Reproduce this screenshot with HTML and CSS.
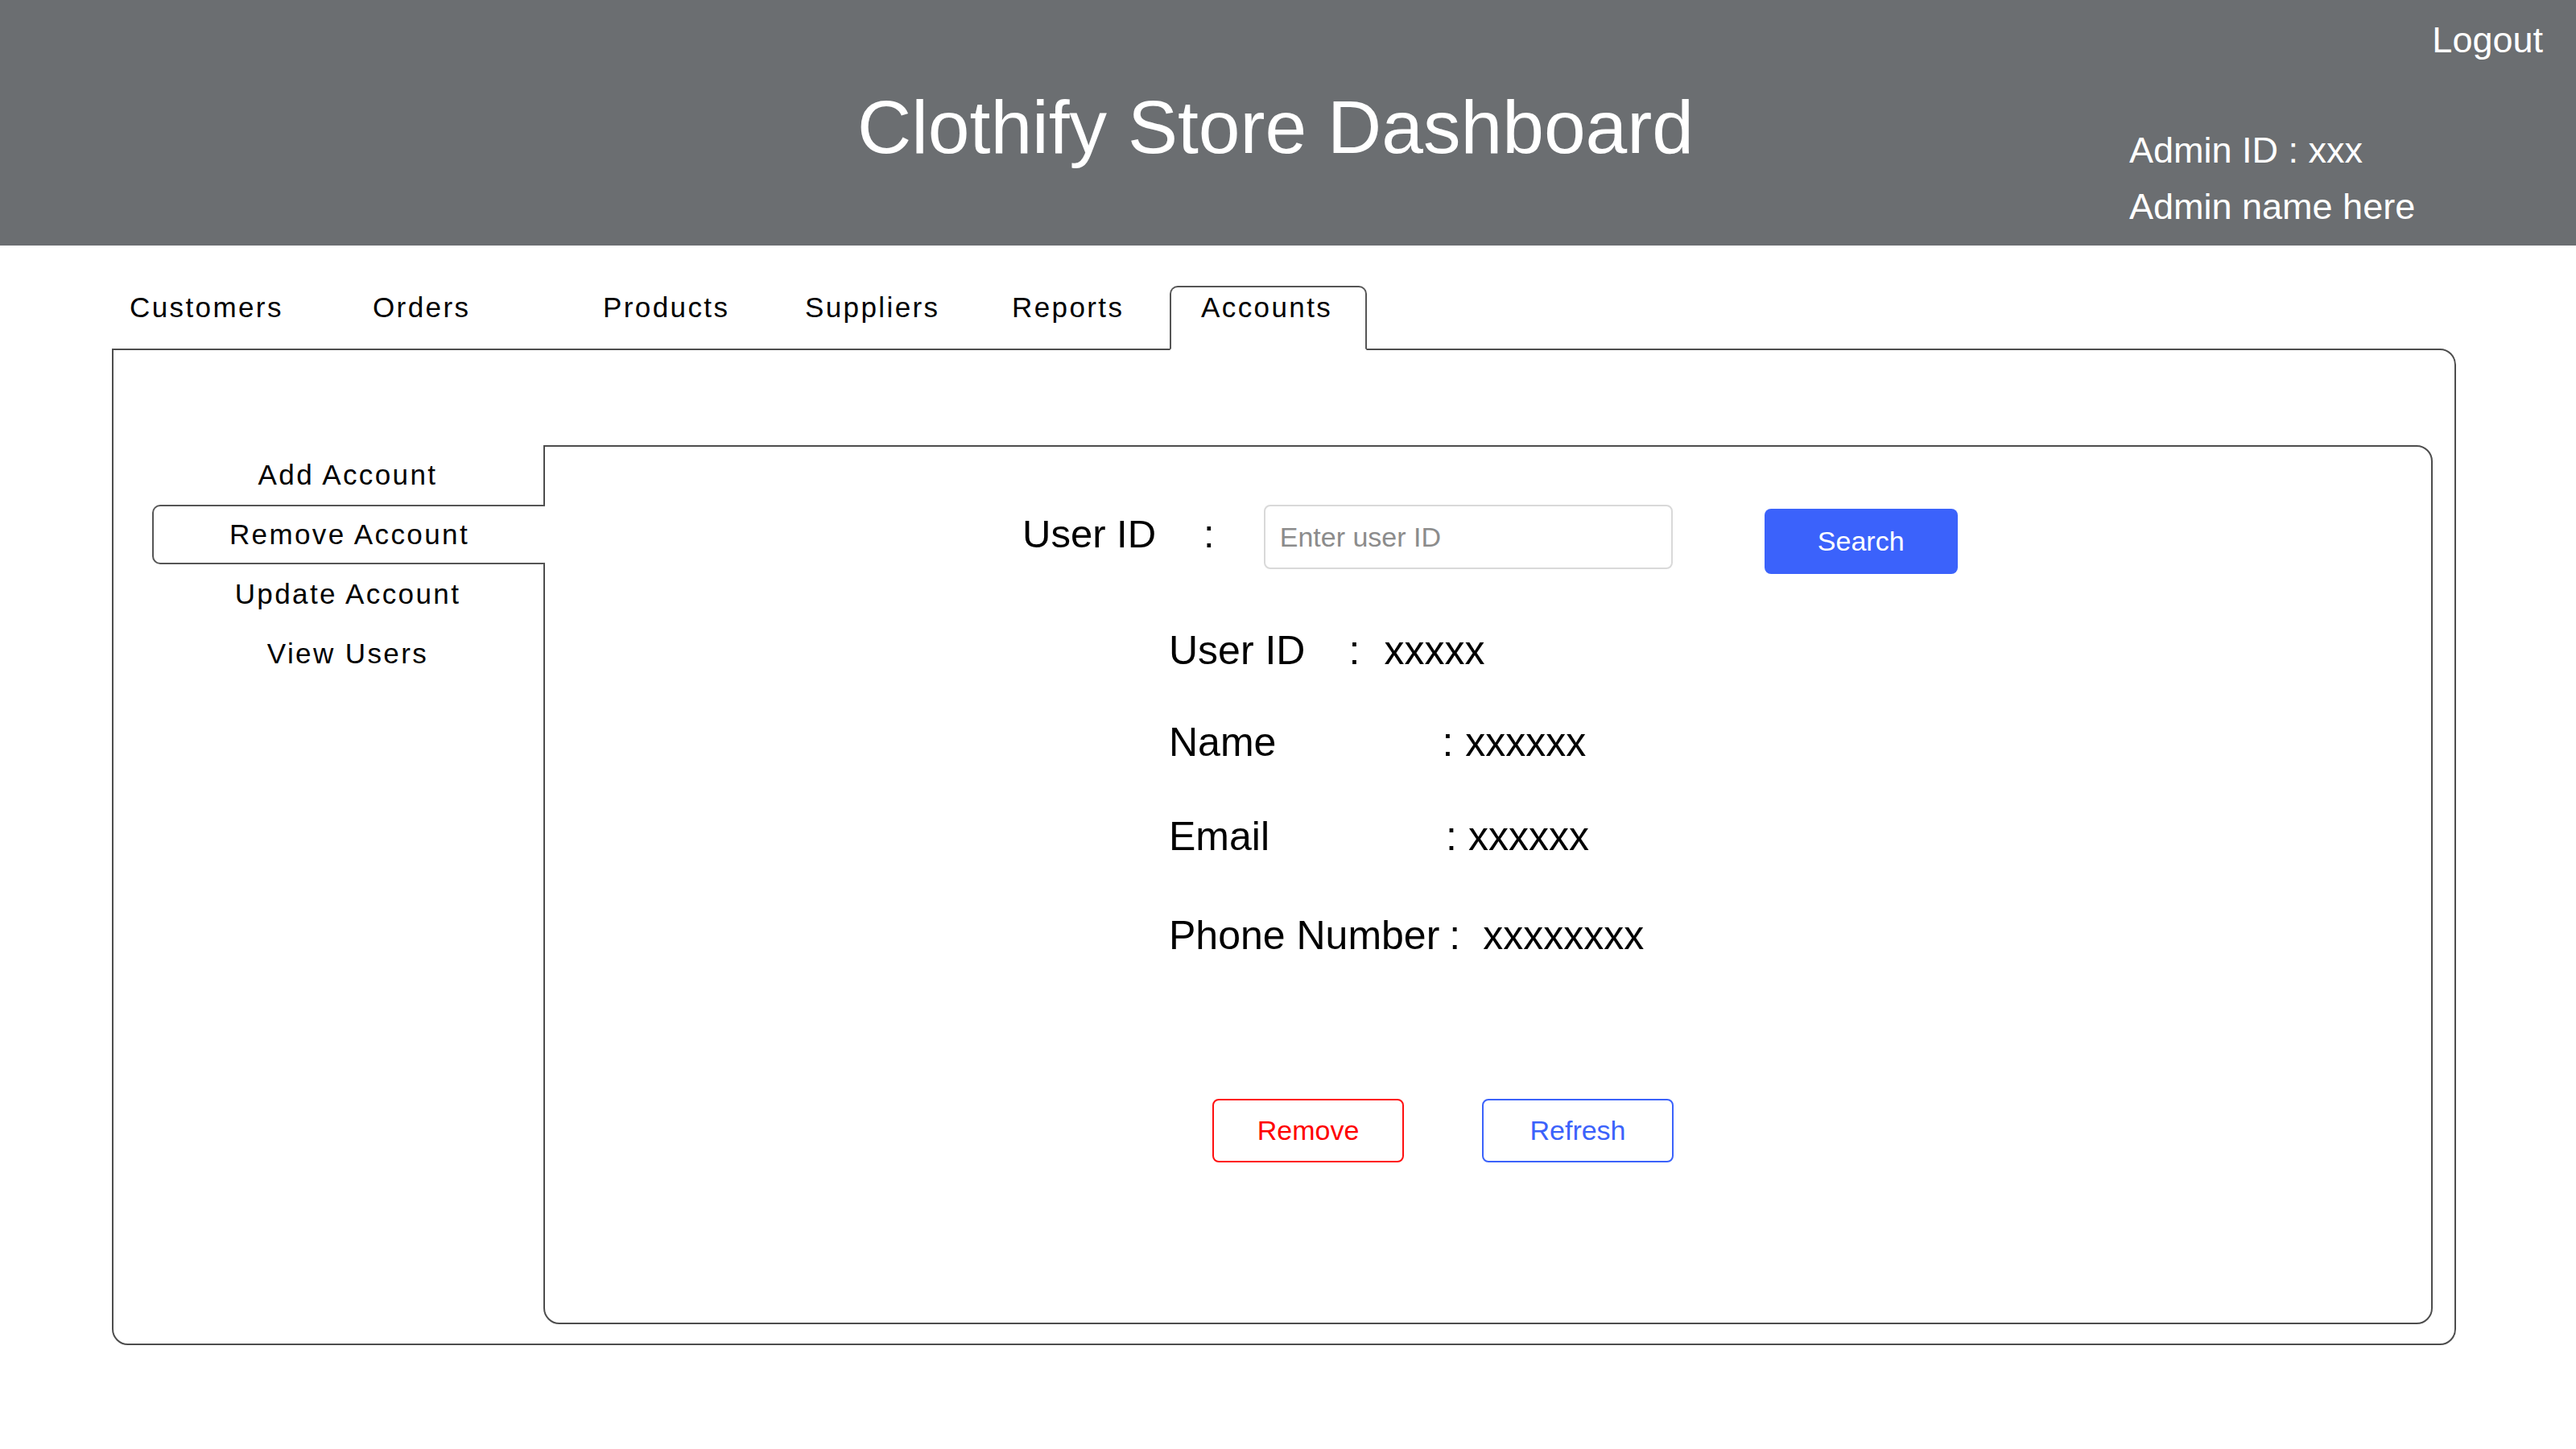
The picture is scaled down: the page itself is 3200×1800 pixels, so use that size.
FILE: index.html
```html
<!DOCTYPE html>
<html lang="en">
<head>
<meta charset="utf-8">
<title>Clothify Store Dashboard</title>
<link rel="stylesheet" href="styles.css">
</head>
<body>
<header class="topbar">
  <h1 class="title">Clothify Store Dashboard</h1>
  <div class="admin">
    <a class="logout">Logout</a>
    <div class="admin-info">
      <div class="admin-line">Admin ID : xxx</div>
      <div class="admin-line">Admin name here</div>
    </div>
  </div>
</header>

<nav class="tabs">
  <div class="tab">Customers</div>
  <div class="tab">Orders</div>
  <div class="tab">Products</div>
  <div class="tab">Suppliers</div>
  <div class="tab">Reports</div>
  <div class="tab tab-active">Accounts</div>
</nav>

<main class="frame">
  <aside class="side">
    <div class="side-item">Add Account</div>
    <div class="side-item side-active">Remove Account</div>
    <div class="side-item">Update Account</div>
    <div class="side-item">View Users</div>
  </aside>
  <section class="panel">
    <div class="search-row">
      <span class="s-label">User ID</span>
      <span class="s-colon">:</span>
      <input class="s-input" type="text" placeholder="Enter user ID">
      <button class="s-btn">Search</button>
    </div>
    <div class="details">
      <div class="d-row"><span>User ID</span><span class="sep sep-id">:</span><span class="val val-id">xxxxx</span></div>
      <div class="d-row d-name"><span>Name</span><span class="sep sep-name">:</span><span class="val val-name">xxxxxx</span></div>
      <div class="d-row d-email"><span>Email</span><span class="sep sep-email">:</span><span class="val val-email">xxxxxx</span></div>
      <div class="d-row d-phone"><span>Phone Number</span><span class="sep sep-phone">:</span><span class="val val-phone">xxxxxxxx</span></div>
    </div>
    <div class="actions">
      <button class="btn btn-remove">Remove</button>
      <button class="btn btn-refresh">Refresh</button>
    </div>
  </section>
</main>
</body>
</html>
```
FILE: styles.css
```css
* { box-sizing: border-box; }
html, body {
  margin: 0;
  padding: 0;
  background: #ffffff;
  font-family: "Liberation Sans", Arial, sans-serif;
  color: #000;
}

/* header */
.topbar {
  height: 305px;
  background: #6b6e71;
  color: #ffffff;
  display: flex;
  justify-content: space-between;
}
.title {
  margin: 0;
  padding: 103px 0 0 1065px;
  font-size: 93px;
  font-weight: 400;
  line-height: 110px;
  white-space: nowrap;
}
.admin {
  width: 555px;
  flex: none;
  display: flex;
  flex-direction: column;
}
.logout {
  align-self: flex-end;
  margin: 24px 41px 0 0;
  font-size: 45px;
  line-height: 52px;
}
.admin-info {
  margin-top: 76px;
}
.admin-line {
  font-size: 45px;
  line-height: 70px;
  white-space: nowrap;
}

/* tabs */
.tabs {
  margin-top: 50px;
  padding-left: 161px;
  display: grid;
  grid-template-columns: 302px 286px 251px 257px 196px 245px;
  align-items: start;
}
.tab {
  font-size: 35px;
  letter-spacing: 2.4px;
  line-height: 40px;
  padding: 7px 0 31px 0;
  white-space: nowrap;
}
.tab-active {
  position: relative;
  z-index: 2;
  background: #fff;
  border: 2px solid #555;
  border-bottom: 2px solid #fff;
  border-radius: 10px 10px 0 0;
  padding: 5px 0 31px 37px;
  margin-bottom: -2px;
}

/* frame */
.frame {
  margin-left: 139px;
  width: 2912px;
  height: 1238px;
  border: 2px solid #4d4d4d;
  border-radius: 0 20px 20px 20px;
  padding: 118px 27px 24px 48px;
  display: flex;
}
.side {
  width: 486px;
  flex: none;
}
.side-item {
  height: 74px;
  line-height: 74px;
  text-align: center;
  font-size: 35px;
  letter-spacing: 2.4px;
  white-space: nowrap;
}
.side-active {
  position: relative;
  z-index: 1;
  background: #fff;
  margin-right: -2px;
  border: 2px solid #555;
  border-right: none;
  border-radius: 10px 0 0 10px;
  line-height: 70px;
}
.panel {
  flex: 1;
  border: 2px solid #4d4d4d;
  border-radius: 0 20px 20px 20px;
  padding: 72px 0 0 0;
}

/* search row */
.search-row {
  display: flex;
  align-items: flex-start;
  padding-left: 593px;
}
.s-label, .s-colon {
  font-size: 49px;
  line-height: 56px;
  margin-top: 8px;
}
.s-colon { margin-left: 59px; }
.s-input {
  margin-left: 61px;
  width: 508px;
  height: 80px;
  border: 2px solid #d9d9d9;
  border-radius: 8px;
  padding: 0 18px;
  font-family: "Liberation Sans", Arial, sans-serif;
  font-size: 34px;
  color: #222;
  background: #fff;
  outline: none;
}
.s-input::placeholder { color: #8c8c8c; }
.s-btn {
  margin-left: 114px;
  margin-top: 5px;
  width: 240px;
  height: 81px;
  border: none;
  border-radius: 8px;
  background: #3b62fb;
  color: #fff;
  font-family: "Liberation Sans", Arial, sans-serif;
  font-size: 34px;
}

/* details */
.details {
  margin-top: 67px;
  padding-left: 775px;
  display: flex;
  flex-direction: column;
}
.d-row {
  display: flex;
  font-size: 50px;
  line-height: 56px;
  white-space: nowrap;
}
.d-name { margin-top: 58px; }
.d-email { margin-top: 61px; }
.d-phone { margin-top: 67px; }
.sep-id { margin-left: 54px; }
.val-id { margin-left: 30px; }
.sep-name { margin-left: 206px; }
.val-name { margin-left: 15px; }
.sep-email { margin-left: 219px; }
.val-email { margin-left: 14px; }
.sep-phone { margin-left: 12px; }
.val-phone { margin-left: 28px; }

/* action buttons */
.actions {
  margin-top: 175px;
  padding-left: 829px;
  display: flex;
  gap: 97px;
}
.btn {
  width: 238px;
  height: 79px;
  background: #fff;
  border-radius: 8px;
  font-family: "Liberation Sans", Arial, sans-serif;
  font-size: 34px;
}
.btn-remove {
  border: 2px solid #ff1010;
  color: #ff0000;
}
.btn-refresh {
  border: 2px solid #3b62fb;
  color: #3b62fb;
}
```
